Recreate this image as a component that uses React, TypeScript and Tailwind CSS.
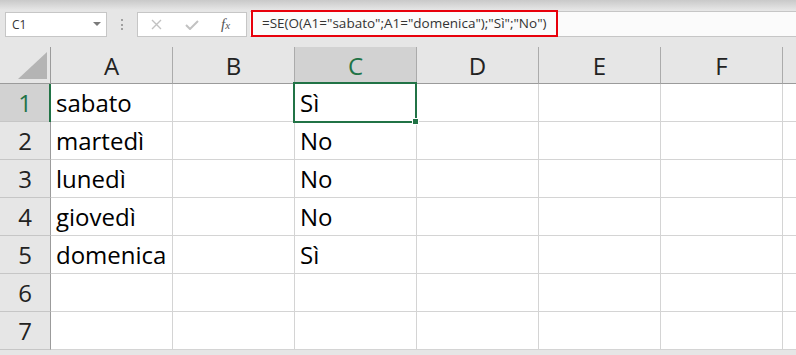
import React from 'react';

const columns = ['A', 'B', 'C', 'D', 'E', 'F', ''];

const rows: string[][] = [
  ['sabato', '', 'Sì'],
  ['martedì', '', 'No'],
  ['lunedì', '', 'No'],
  ['giovedì', '', 'No'],
  ['domenica', '', 'Sì'],
  [],
  [],
];

const GREEN = 'border-[#217346]';

function FormulaBar() {
  return (
    <div className="flex h-[26px] items-stretch mt-[11px] text-[#333]">
      {/* name box */}
      <div className="ml-[5px] mt-px flex h-[25px] w-[102px] items-center justify-between border border-[#c6c6c6] bg-white pl-[6px] pr-[5px]">
        <span className="text-[12px] leading-none">C1</span>
        <svg width="8" height="5" viewBox="0 0 8 5">
          <polygon points="0,0 8,0 4,4" fill="#7a7a7a" />
        </svg>
      </div>

      {/* grip dots */}
      <div className="flex w-[30px] flex-col items-center justify-center gap-[2.5px] pt-px">
        <span className="h-[2px] w-[2px] bg-[#a0a0a0]" />
        <span className="h-[2px] w-[2px] bg-[#a0a0a0]" />
        <span className="h-[2px] w-[2px] bg-[#a0a0a0]" />
      </div>

      {/* cancel / enter / insert function */}
      <div className="mt-px flex h-[25px] w-[110px] items-center border border-[#c6c6c6] bg-white">
        <svg className="ml-[13px]" width="11" height="11" viewBox="0 0 11 11">
          <path d="M1 1 L10 10 M10 1 L1 10" stroke="#c2c2c2" strokeWidth="1.4" />
        </svg>
        <svg className="ml-[23px]" width="14" height="10" viewBox="0 0 14 10">
          <path d="M1 5 L5 9 L13 1" stroke="#c2c2c2" strokeWidth="2" fill="none" />
        </svg>
        <span className="ml-[22px] font-['Liberation_Serif',serif] text-[15px] italic leading-none text-[#555]">
          f<span className="text-[11px]">x</span>
        </span>
      </div>

      {/* formula input */}
      <div className="ml-[3px] flex flex-1 border-y border-[#c6c6c6] bg-[#fbfbfb]">
        <div className="-mt-[2px] ml-px flex h-[27px] w-[307px] items-center border-2 border-[#e8000b] pl-[9px] text-[13.5px]">
          =SE(O(A1="sabato";A1="domenica");"Sì";"No")
        </div>
      </div>
    </div>
  );
}

function HeaderRow() {
  return (
    <div className="mt-[10px] flex h-[37px]">
      <div className="relative h-[37px] w-[51px] shrink-0 border-b border-r border-[#9b9b9b]">
        <svg className="absolute left-[18px] top-[5px]" width="30" height="28" viewBox="0 0 30 28">
          <polygon points="29,0 29,27 0,27" fill="#b4b4b4" />
        </svg>
      </div>
      {columns.map((c, i) => {
        const active = c === 'C';
        return (
          <div
            key={i}
            className={`flex h-[37px] w-[122px] shrink-0 items-end justify-center border-r border-r-[#ababab] ${
              active ? `border-b-2 ${GREEN} bg-[#d2d2d2] pb-[4px] text-[#217346]` : 'border-b border-b-[#9b9b9b] pb-[5px] text-[#222]'
            } text-[24px] leading-none`}
          >
            {c}
          </div>
        );
      })}
    </div>
  );
}

function Row({ index, cells }: { index: number; cells: string[] }) {
  const first = index === 1;
  return (
    <div className="flex h-[38px]">
      <div
        className={`relative flex h-[38px] w-[51px] shrink-0 items-end justify-center border-b border-r border-b-[#c6c6c6] border-r-[#9b9b9b] pb-[6px] text-[24px] leading-none ${
          first ? 'bg-[#d2d2d2] text-[#217346]' : 'text-[#222]'
        }`}
      >
        {index}
        {first && <span className="absolute right-[-1px] top-0 h-[38px] w-[2px] bg-[#217346]" />}
      </div>
      {columns.map((c, i) => (
        <div
          key={i}
          className="relative flex h-[38px] w-[122px] shrink-0 items-end border-b border-r border-[#d4d4d4] bg-white pb-[6px] pl-[5px] text-[24px] leading-none text-black"
        >
          {cells[i] ?? ''}
          {first && c === 'C' && (
            <div className={`absolute left-[-2px] top-[-2px] z-10 h-[41px] w-[124px] border-2 ${GREEN}`}>
              <span className="absolute bottom-[-4px] right-[-4px] h-[7px] w-[7px] border border-white bg-[#217346]" />
            </div>
          )}
        </div>
      ))}
    </div>
  );
}

export default function App() {
  return (
    <div className="relative h-[355px] w-[796px] overflow-hidden bg-[#e6e6e6] font-['Open_Sans',sans-serif]">
      <div className="absolute left-0 top-0 h-[10px] w-full bg-gradient-to-b from-[#c9c9c9] to-[#e6e6e6]" />
      <div className="relative">
        <FormulaBar />
        <HeaderRow />
        {rows.map((cells, i) => (
          <Row key={i} index={i + 1} cells={cells} />
        ))}
      </div>
    </div>
  );
}
